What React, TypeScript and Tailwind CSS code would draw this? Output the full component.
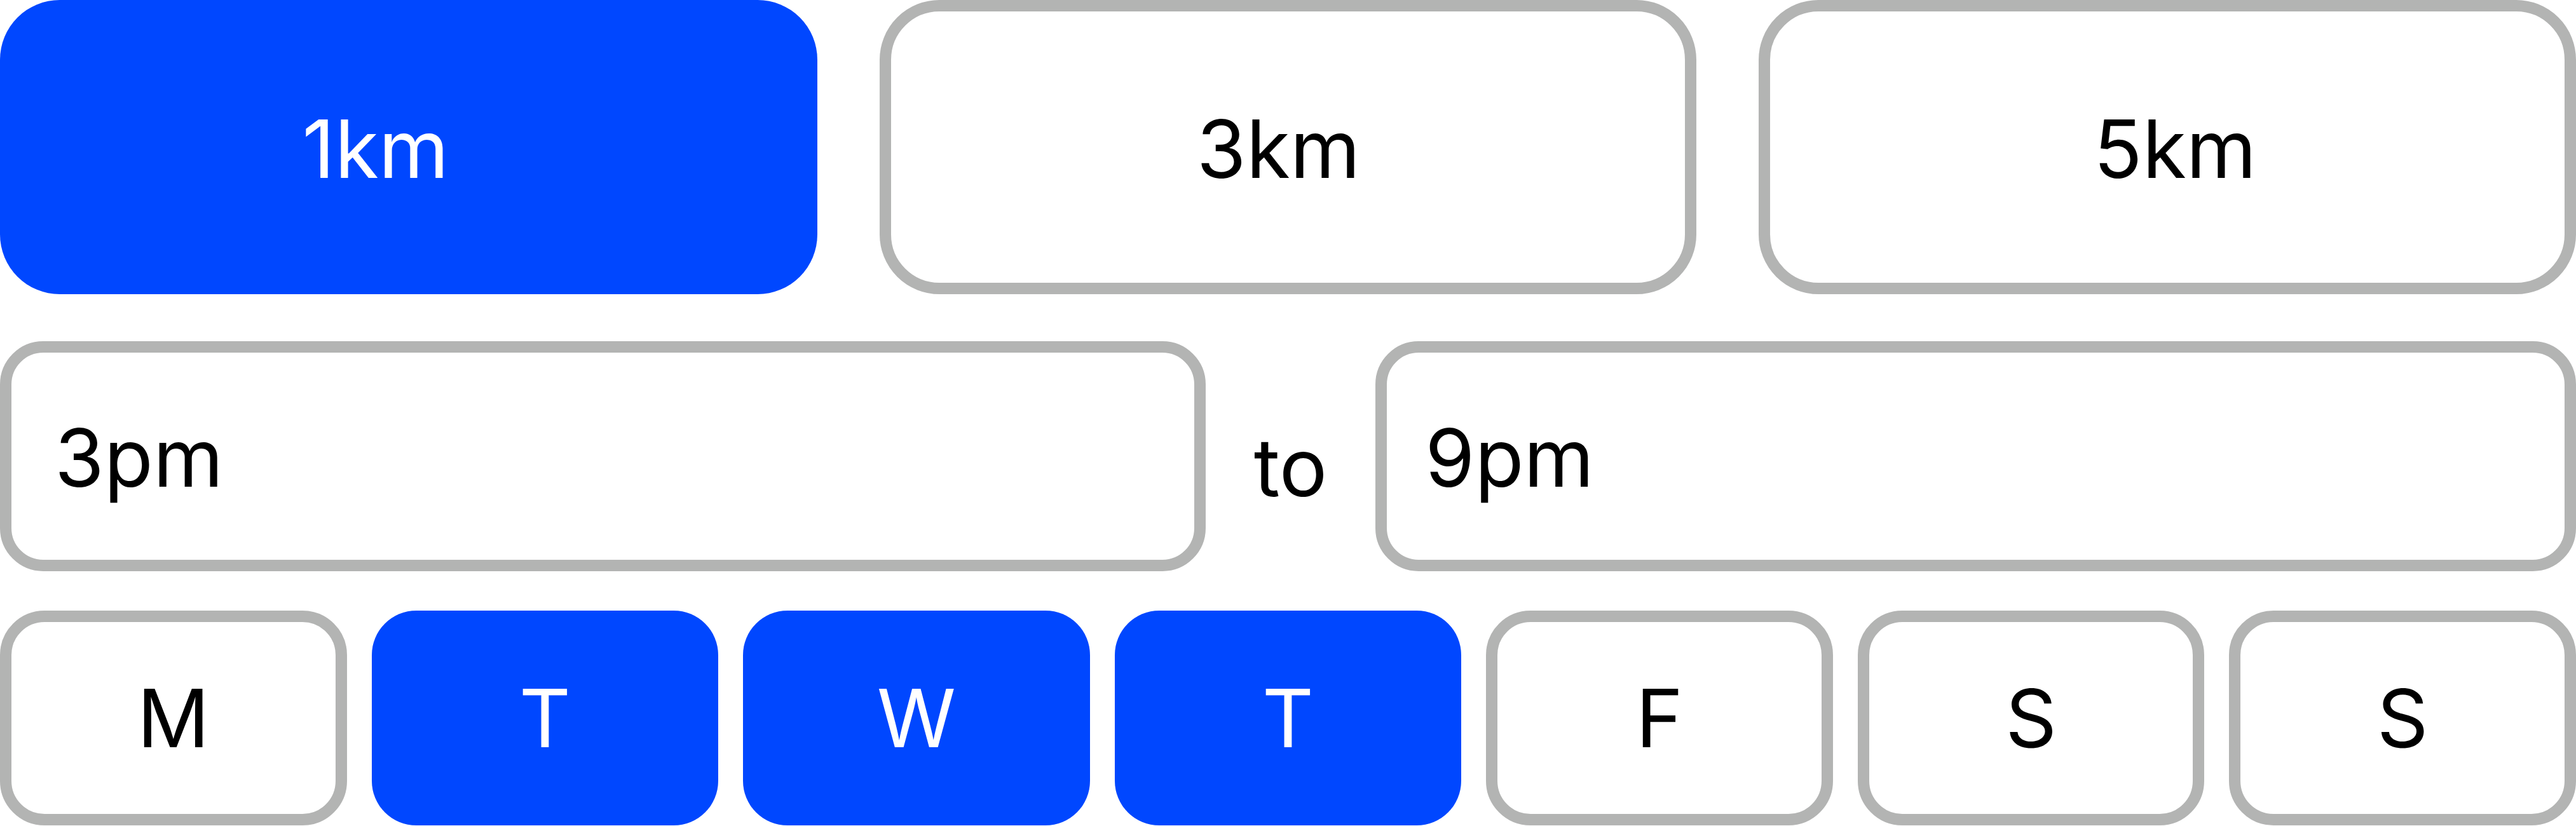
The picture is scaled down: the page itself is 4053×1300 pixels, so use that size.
const distances = [
  { label: "1km", active: true, shift: "pr-[104px]" },
  { label: "3km", active: false, shift: "pr-[30px]" },
  { label: "5km", active: false, shift: "pl-[24px]" },
];

const days = [
  { label: "M", active: false },
  { label: "T", active: true },
  { label: "W", active: true },
  { label: "T", active: true },
  { label: "F", active: false },
  { label: "S", active: false },
  { label: "S", active: false },
];

const font = "font-['Inter','Liberation_Sans',sans-serif]";

export default function App() {
  return (
    <div className={`w-[4053px] h-[1300px] bg-white flex flex-col ${font} text-[126px] leading-none font-normal text-black`}>
      <div className="grid grid-cols-3 gap-[98px] h-[463px]">
        {distances.map((d) =>
          d.active ? (
            <div key={d.label} className={`rounded-[94px] bg-[#0047ff] text-white flex items-center justify-center pt-[4px] ${d.shift}`}>
              {d.label}
            </div>
          ) : (
            <div key={d.label} className={`rounded-[94px] border-[18px] border-[#b3b4b3] bg-white flex items-center justify-center pt-[4px] ${d.shift}`}>
              {d.label}
            </div>
          )
        )}
      </div>

      <div className="mt-[74px] h-[362px] flex items-center gap-[76px]">
        <div className="flex-1 h-full rounded-[68px] border-[18px] border-[#b3b4b3] flex items-center pl-[68px] pt-[4px]">
          3pm
        </div>
        <span className="mt-[34px]">to</span>
        <div className="flex-1 h-full rounded-[68px] border-[18px] border-[#b3b4b3] flex items-center pl-[60px] pt-[4px]">
          9pm
        </div>
      </div>

      <div className="mt-[62px] h-[338px] grid grid-cols-7 gap-[39px]">
        {days.map((d, i) =>
          d.active ? (
            <div key={i} className="rounded-[70px] bg-[#0047ff] text-white flex items-center justify-center">
              {d.label}
            </div>
          ) : (
            <div key={i} className="rounded-[70px] border-[18px] border-[#b3b4b3] bg-white flex items-center justify-center">
              {d.label}
            </div>
          )
        )}
      </div>
    </div>
  );
}
